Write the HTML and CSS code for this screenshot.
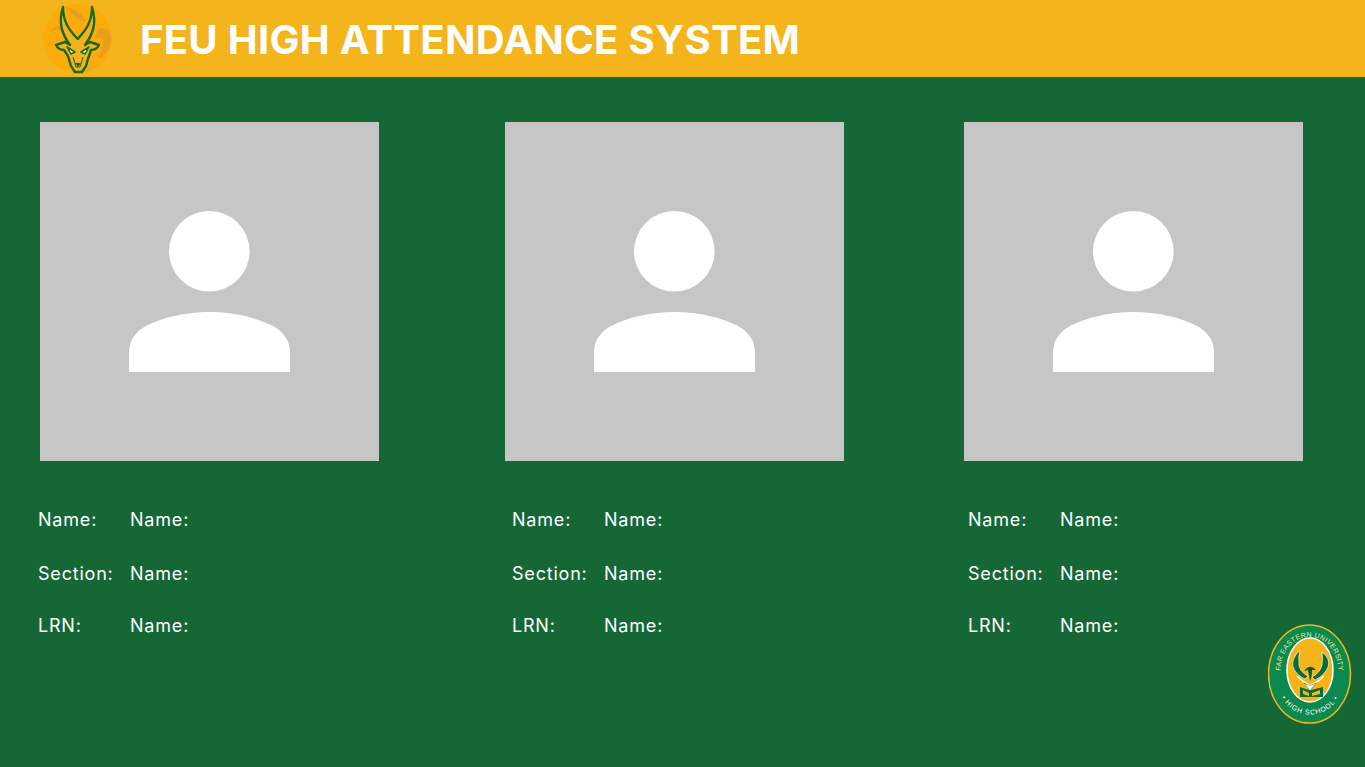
FILE: index.html
```html
<!DOCTYPE html>
<html lang="en">
<head>
  <meta charset="UTF-8">
  <title>FEU High Attendance System</title>
  <link rel="stylesheet" href="styles.css">
</head>
<body>

<header class="top">
  <svg class="mascot" viewBox="0 0 76 76">
    <circle cx="37.500" cy="37.500" r="34.500" fill="#fdab08"/>
    <!-- darker pattern behind the head -->
    <path d="M25 6 Q40 8 47 22 L39 19 Q33 14 25 6Z M9 31 Q20 20 27 24 L29 30 Q18 27 9 31Z M60 27 Q72 26 71 40 Q69 50 60 58 L58 55 Q65 46 63 38 L56 37 Q56 30 60 27Z" fill="#e5a11e"/>
    <path d="M29 62 L44 68 L54 60 L56 66 Q48 72 38 72 Q32 70 29 62Z" fill="#f0aa14"/>
    <!-- head -->
    <path d="M23 6 C18 22 22 33 30 44 L25 41 L16 44 C18 48 21 49 24 49 L28 55 L31 65 L35 71 H42 L46 65 L48 58 L51 49 C54 49 57 48 59 44 L50 41 L45 44 C53 33 57 22 52 6 C52 22 45 30 37.700 38 C30 30 23 22 23 6Z" fill="#f3b21e" stroke="#1a6a1c" stroke-width="2.400" stroke-linejoin="round"/>
    <path d="M33 56 L36 66 H40 L43 56" fill="none" stroke="#1a6a1c" stroke-width="1"/>
    <path d="M27 46 L35 51 L31 53Z M49 46 L41 51 L45 53Z" fill="#fff" stroke="#1a6a1c" stroke-width="1.500" stroke-linejoin="round"/>
    <path d="M35 62 H41 L38 66Z" fill="#1a6a1c"/>
  </svg>
  <h1>FEU HIGH ATTENDANCE SYSTEM</h1>
</header>

<div class="photos">
  <div class="photo">
    <svg viewBox="0 0 339 339"><circle cx="169.300" cy="129.300" r="40.300"/><path d="M89 250 V231 C89 217 97 209 106 204 C124 195 146 190 169.500 190 C193 190 215 195 233 204 C242 209 250 217 250 231 V250Z"/></svg>
  </div>
  <div class="photo">
    <svg viewBox="0 0 339 339"><circle cx="169.300" cy="129.300" r="40.300"/><path d="M89 250 V231 C89 217 97 209 106 204 C124 195 146 190 169.500 190 C193 190 215 195 233 204 C242 209 250 217 250 231 V250Z"/></svg>
  </div>
  <div class="photo">
    <svg viewBox="0 0 339 339"><circle cx="169.300" cy="129.300" r="40.300"/><path d="M89 250 V231 C89 217 97 209 106 204 C124 195 146 190 169.500 190 C193 190 215 195 233 204 C242 209 250 217 250 231 V250Z"/></svg>
  </div>
</div>

<div class="infos">
  <dl class="info">
    <dt>Name:</dt><dd>Name:</dd>
    <dt>Section:</dt><dd>Name:</dd>
    <dt>LRN:</dt><dd>Name:</dd>
  </dl>
  <dl class="info">
    <dt>Name:</dt><dd>Name:</dd>
    <dt>Section:</dt><dd>Name:</dd>
    <dt>LRN:</dt><dd>Name:</dd>
  </dl>
  <dl class="info">
    <dt>Name:</dt><dd>Name:</dd>
    <dt>Section:</dt><dd>Name:</dd>
    <dt>LRN:</dt><dd>Name:</dd>
  </dl>
</div>

<svg class="seal" viewBox="0 0 84 102">
  <ellipse cx="41.500" cy="51" rx="41" ry="49" fill="#0a8a50" stroke="#f5b51a" stroke-width="1.500"/>
  <ellipse cx="42" cy="47" rx="23" ry="32" fill="#f5b51a" stroke="#fff" stroke-width="1.500"/>
  <path id="sealTop" d="M13 66 C8 30 24 14 41.500 14 S75 30 70 66" fill="none"/>
  <path id="sealBottom" d="M10 66 C20 100 64 100 74 66" fill="none"/>
  <text class="seal-top"><textPath href="#sealTop" startOffset="50%" text-anchor="middle">FAR EASTERN UNIVERSITY</textPath></text>
  <text class="seal-bottom"><textPath href="#sealBottom" startOffset="50%" text-anchor="middle">• HIGH SCHOOL •</textPath></text>
  <!-- antlers -->
  <path d="M32 27 Q23 36 25 44 Q28 52 37 56 L40 53 Q32 49 31 42 Q30 34 32 27Z M54 29 Q63 36 60 44 Q57 52 47 57 L44 54 Q52 50 54 42 Q55 35 54 29Z" fill="#0d6b38" stroke="#fff" stroke-width=".6"/>
  <!-- bird and head -->
  <path d="M36 48 Q42 40 48 47 L44 47 Q44 54 42 58 Q41 52 40 47Z" fill="#0d5b30"/>
  <path d="M29 53 Q36 60 42 62 Q49 60 56 53" fill="none" stroke="#fff" stroke-width="1.200"/>
  <path d="M36 60 L42 68 L48 60 L44 62 H40Z" fill="#fff" stroke="#0d6b38" stroke-width=".5"/>
  <!-- book -->
  <path d="M32 64 L41 67 L43 67 L55 64 V74 H32Z" fill="#0d6b38"/>
  <path d="M35 67 L41 70 V73 L35 71Z M52 67 L44 70 V73 L52 71Z" fill="#f5b51a"/>
</svg>

</body>
</html>
```

FILE: styles.css
```css
* {
  margin: 0;
  padding: 0;
  box-sizing: border-box;
}

html,
body {
  height: 100%;
  overflow: hidden;
}

body {
  background-color: #156735;
  color: #fff;
  font-family: "Inter", "Liberation Sans", sans-serif;
}

.top {
  height: 77px;
  display: flex;
  align-items: center;
  padding-left: 40px;
  background-color: #f4b41c;
}

.mascot {
  width: 76px;
  height: 76px;
  margin-right: 24px;
}

.top h1 {
  padding-top: 2px;
  font-size: 40px;
  font-weight: 700;
  letter-spacing: .3px;
  white-space: nowrap;
}

/* the photo row and the text row do not share the same left edges */
.photos {
  display: grid;
  grid-template-columns: 465px 459px 339px;
  padding: 45px 0 0 40px;
}

.photo {
  width: 339px;
  height: 339px;
  background-color: #c6c6c6;
}

.photo svg {
  display: block;
  width: 100%;
  height: 100%;
  fill: #fff;
}

.infos {
  display: grid;
  grid-template-columns: 474px 456px 300px;
  padding: 45px 0 0 38px;
}

.info {
  display: grid;
  grid-template-columns: 92px 1fr;
  grid-template-rows: 54px 52px 27px;
  font-size: 18px;
  line-height: 27px;
  letter-spacing: .8px;
}

.seal {
  position: absolute;
  left: 1268px;
  top: 623px;
  width: 84px;
  height: 102px;
}

.seal-top {
  fill: #f6e48a;
  font-family: "Liberation Sans", sans-serif;
  font-size: 7px;
  letter-spacing: .3px;
}

.seal-bottom {
  fill: #fff;
  font-family: "Liberation Sans", sans-serif;
  font-size: 7px;
  letter-spacing: .8px;
}
```
